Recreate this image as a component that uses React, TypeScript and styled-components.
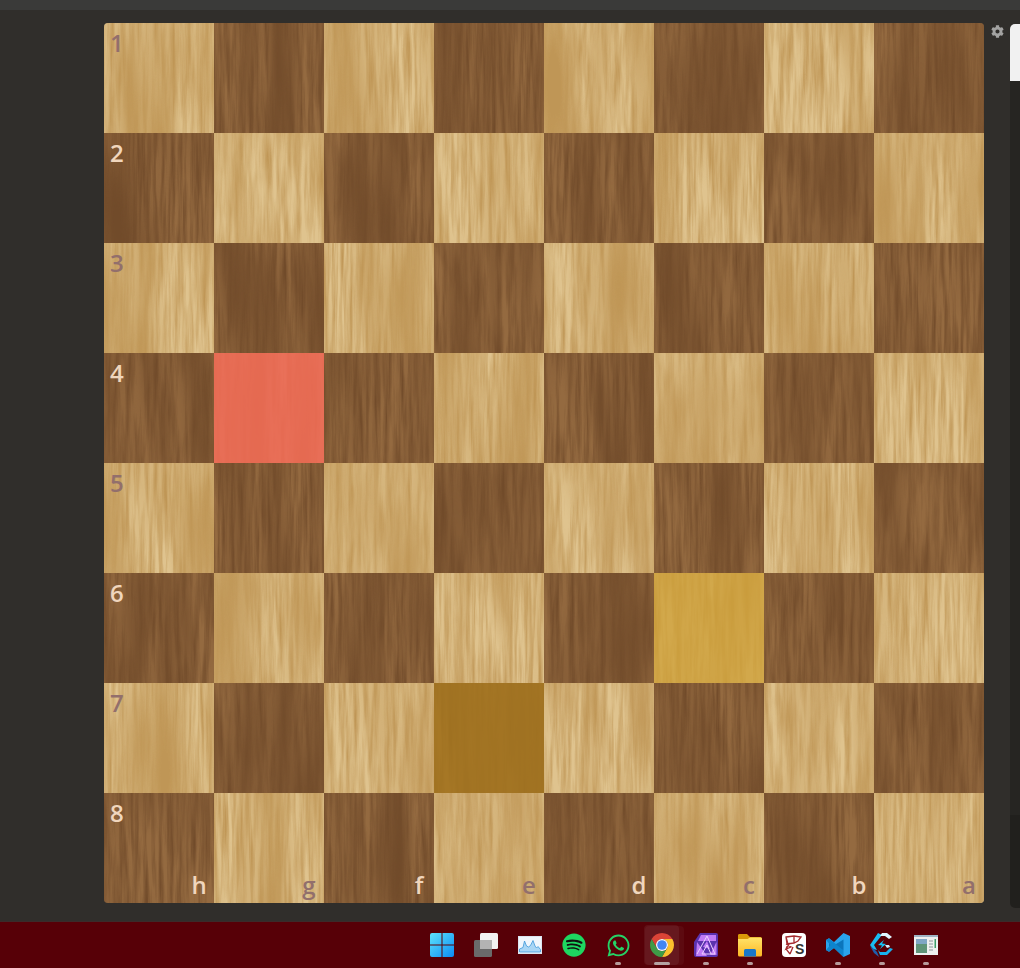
import React from "react";
import styled, { createGlobalStyle } from "styled-components";
import { FaCog, FaSpotify, FaWhatsapp } from "react-icons/fa";

const Global = createGlobalStyle`
  html, body { margin: 0; padding: 0; background: #302e2b; overflow: hidden; }
  * { box-sizing: border-box; }
`;

const Page = styled.div`
  width: 1020px;
  height: 968px;
  display: flex;
  flex-direction: column;
  background: #302e2b;
  font-family: "Open Sans", "Noto Sans", sans-serif;
`;
const TopBar = styled.div`
  height: 10px;
  background: #3a3a39;
`;
const Main = styled.main`
  flex: 1;
  display: flex;
  padding: 13px 0 0 104px;
`;
const Board = styled.div`
  width: 880px;
  height: 880px;
  display: grid;
  grid-template-columns: repeat(8, 110px);
  grid-template-rows: repeat(8, 110px);
  border-radius: 4px;
  overflow: hidden;
`;
const Cell = styled.div<{ $dark: boolean }>`
  position: relative;
  background: ${(p) => (p.$dark ? "#946a40" : "#dfc38e")};
`;
const GrainSvg = styled.svg`
  position: absolute;
  inset: 0;
  width: 110px;
  height: 110px;
  display: block;
`;
const Mark = styled.div<{ $color: string }>`
  position: absolute;
  inset: 0;
  background: ${(p) => p.$color};
`;
const Coord = styled.span<{ $dark: boolean }>`
  position: absolute;
  font-size: 24px;
  line-height: 32px;
  font-weight: 600;
  color: ${(p) => (p.$dark ? "#f0d6bd" : "#926f6c")};
`;
const Rank = styled(Coord)`
  top: 4px;
  left: 6px;
`;
const File = styled(Coord)`
  right: 6px;
  bottom: 2px;
  width: 18px;
  text-align: center;
`;
const Side = styled.aside`
  width: 26px;
  display: flex;
  justify-content: center;
  padding-top: 2px;
  color: #a3a3a2;
  font-size: 13px;
  line-height: 13px;
`;
const ScrollTrack = styled.div`
  width: 10px;
  height: 884px;
  margin-top: 1px;
  border-radius: 5px 0 0 5px;
  overflow: hidden;
  background: linear-gradient(#262522 0 791px, #21201d 791px);
`;
const ScrollThumb = styled.div`
  height: 57px;
  background: #f1f1f1;
`;
const Taskbar = styled.footer`
  height: 47px;
  display: flex;
  align-items: center;
  padding-left: 420px;
  background: #570007;
  border-top: 1px solid #3c2b2a;
`;
const TaskItem = styled.div<{ $active?: boolean }>`
  position: relative;
  width: 44px;
  height: 46px;
  display: flex;
  align-items: center;
  justify-content: center;
  ${(p) =>
    p.$active
      ? `&::before { content: ""; position: absolute; left: 5px; top: 4px; width: 39px; height: 39px; border-radius: 4px;
           background: rgba(255,255,255,.04); }
         &::after { content: ""; position: absolute; left: 4px; top: 3px; width: 35px; height: 40px; border-radius: 4px;
           background: rgba(255,255,255,.06); }`
      : ""}
`;
const IconSlot = styled.span`
  position: relative;
  z-index: 1;
  width: 24px;
  height: 24px;
  display: block;
  svg { display: block; }
`;
const Dot = styled.span<{ $wide?: boolean }>`
  position: absolute;
  z-index: 2;
  left: 50%;
  bottom: 3px;
  width: ${(p) => (p.$wide ? 16 : 6)}px;
  height: 3px;
  margin-left: ${(p) => (p.$wide ? -8 : -3)}px;
  border-radius: 2px;
  background: ${(p) => (p.$wide ? "#b5a3a3" : "#b79a9a")};
`;

function hash(n: number) {
  return ((n * 7919 + 13) % 997) + 1;
}
const Grain = ({ seed, dark }: { seed: number; dark: boolean }) => {
  const id = `wood-${seed}`;
  const c = dark ? "0 0 0 0 0.443  0 0 0 0 0.294  0 0 0 0 0.165" : "0 0 0 0 0.749  0 0 0 0 0.588  0 0 0 0 0.337";
  const fx = 0.16 + (seed % 5) * 0.02;
  const bx = 0.02 + (seed % 3) * 0.008;
  return (
    <GrainSvg viewBox="0 0 110 110">
      <defs>
        <filter id={id} x="0" y="0" width="100%" height="100%" colorInterpolationFilters="sRGB">
          <feTurbulence type="fractalNoise" baseFrequency={`${bx} 0.005`} numOctaves={2} seed={hash(seed)} result="broad" />
          <feColorMatrix in="broad" type="matrix" values={`${c}  1.9 0 0 0 -0.6`} result="a" />
          <feTurbulence type="fractalNoise" baseFrequency={`${fx} 0.012`} numOctaves={4} seed={hash(seed + 100)} result="fine" />
          <feColorMatrix in="fine" type="matrix" values={`${c}  1.9 0 0 0 -0.65`} result="b" />
          <feMerge>
            <feMergeNode in="a" />
            <feMergeNode in="b" />
          </feMerge>
        </filter>
      </defs>
      <rect width="110" height="110" filter={`url(#${id})`} />
    </GrainSvg>
  );
};

const Win = () => (
  <svg width="24" height="24" viewBox="0 0 24 24">
    <defs>
      <linearGradient id="w" x1="0" y1="0" x2="1" y2="1">
        <stop offset="0" stopColor="#5fe3fb" />
        <stop offset="1" stopColor="#0a8cf5" />
      </linearGradient>
    </defs>
    <path fill="url(#w)" d="M0 2a2 2 0 0 1 2-2h9.500v11.500H0zM12.500 0H22a2 2 0 0 1 2 2v9.500H12.500zM0 12.500h11.500V24H2a2 2 0 0 1-2-2zM12.500 12.500H24V22a2 2 0 0 1-2 2h-9.500z" />
  </svg>
);
const TaskView = () => (
  <svg width="24" height="24" viewBox="0 0 24 24">
    <rect x="0" y="7" width="18" height="17" rx="1.5" fill="#6a6a6a" />
    <rect x="6" y="0" width="18" height="16" rx="1.5" fill="#f2f2f2" />
    <rect x="6" y="7" width="12" height="9" fill="#b3b3b3" />
  </svg>
);
const Monitor = () => (
  <svg width="24" height="24" viewBox="0 0 24 24">
    <rect x="0" y="3" width="24" height="18" fill="#dbe5f0" />
    <rect x="1" y="4" width="22" height="16" fill="#f0f6fc" />
    <path fill="#a9d6f5" stroke="#3d97d8" strokeWidth=".8" d="M1.500 19V16L5 14.500 6.500 8 8.500 13l2 1 2-1.500 2.500-5L17 13l1.500 2L20 13.500l2.500 3V19z" />
  </svg>
);
const Chrome = () => (
  <svg width="24" height="24" viewBox="4 4 40 40">
    <path fill="#db4437" d="M6.680 14A20 20 0 0 1 41.320 14H24A10 10 0 0 0 15.340 29z" />
    <path fill="#fbc02d" d="M41.320 14A20 20 0 0 1 24 44L32.660 29A10 10 0 0 0 24 14z" />
    <path fill="#3f9b47" d="M24 44A20 20 0 0 1 6.680 14L15.340 29A10 10 0 0 0 32.660 29z" />
    <circle cx="24" cy="24" r="10" fill="#fff" />
    <circle cx="24" cy="24" r="8" fill="#4285f4" />
  </svg>
);
const Affinity = () => (
  <svg width="24" height="24" viewBox="0 0 24 24">
    <path fill="#5a32ae" d="M6 0h16a2 2 0 0 1 2 2v20a2 2 0 0 1-2 2H2a2 2 0 0 1-2-2V9z" />
    <path fill="#c07af5" d="M7 2h15v6H4zM22.500 9v13H16zM3 9l10 14H2zM9 14l4-6 3 8z" />
    <path fill="none" stroke="#ecd0ff" strokeWidth="1" d="M3 21 13 3l8 18H8l5-9 4 9" />
  </svg>
);
const Folder = () => (
  <svg width="24" height="24" viewBox="0 0 24 24">
    <defs>
      <linearGradient id="f" x1="0" y1="0" x2="0" y2="1">
        <stop offset="0" stopColor="#ffe36a" />
        <stop offset="1" stopColor="#fdb824" />
      </linearGradient>
    </defs>
    <path fill="#d99a09" d="M0 2a1.500 1.500 0 0 1 1.500-1H9l3 3h10.500A1.500 1.500 0 0 1 24 5.500V10H0z" />
    <path fill="url(#f)" d="M0 6h9.500L12 4.500h10.500A1.500 1.500 0 0 1 24 6v16a1.500 1.500 0 0 1-1.500 1.500h-21A1.500 1.500 0 0 1 0 22z" />
    <path fill="#1a78c8" d="M6 17.500a1.500 1.500 0 0 1 1.500-1.500h9a1.500 1.500 0 0 1 1.500 1.500v6H6z" />
  </svg>
);
const KS = () => (
  <svg width="24" height="24" viewBox="0 0 24 24">
    <rect width="24" height="24" rx="4" fill="#fff" />
    <path fill="none" stroke="#a52a2f" strokeWidth="1.300" d="M4 4 12 3l7 1-3 4-4 2-7 1zM4 4l2 7-2 5 4 5M12 3l0 7M8 10l-4 6 5-2-5-3M8 21l3-7" />
    <text x="13" y="21" fontFamily="Liberation Sans, sans-serif" fontSize="14" fontWeight="700" fill="#333">S</text>
  </svg>
);
const VSCode = () => (
  <svg width="24" height="24" viewBox="0 0 24 24">
    <path fill="#2aa3ec" d="M17.500 0 24 3v18l-6.500 3-9.500-9L3 18.700 0 17V7l3-1.700L8 9z" />
    <path fill="#0b75bb" d="M17.500 6.500v11L8.500 12zM3 8.500 6 12l-3 3.500z" />
    <path fill="#0e84cd" d="M0 7l3-1.700L17.500 17.500V24L8 15 3 18.700 0 17l4.500-5z" />
  </svg>
);
const Crystal = () => (
  <svg width="24" height="24" viewBox="0 0 24 24">
    <path fill="#19bdf2" d="M8 0 12 2 4 12l3 5-4-1-3-4z" />
    <path fill="#1f5fae" d="M0 13l4 3 3 3 2 5-5-4z" />
    <path fill="#dff6ff" d="M12 0h5l5 4-3 2-4-3h-5z" />
    <path fill="#18b2ec" d="M10 22h7l6-6-3-1-4 4h-6l-2-2z" />
    <path fill="#14c4f7" d="M14 7 8 12l4 .5-2 3.500 6-5-4-.5z" />
    <path fill="#cfeefd" d="M15 12h4l1 2-3 1z" />
  </svg>
);
const Sheet = () => (
  <svg width="24" height="24" viewBox="0 0 24 24">
    <rect y="2" width="24" height="20" fill="#eef0ef" />
    <rect y="2" width="24" height="2" fill="#9fb4c4" />
    <rect x="2" y="6" width="11" height="14" fill="#5f9478" />
    <rect x="2" y="6" width="11" height="5" fill="#7fa6c4" />
    <path stroke="#8d959b" strokeWidth="1.200" d="M15 8h4M15 11h4M15 14h4M15 17h4" />
    <rect x="20.500" y="6" width="1.500" height="9" fill="#3f9d6a" />
  </svg>
);
const Spotify = () => (
  <svg width="24" height="24" viewBox="0 0 24 24">
    <circle cx="12" cy="12" r="11" fill="#111" />
    <FaSpotify x={0} y={0} size={24} color="#1ed760" />
  </svg>
);

const tasks: { icon: React.ReactNode; dot?: boolean; active?: boolean }[] = [
  { icon: <Win /> },
  { icon: <TaskView /> },
  { icon: <Monitor /> },
  { icon: <Spotify /> },
  { icon: <FaWhatsapp size={25} color="#25d366" />, dot: true },
  { icon: <Chrome />, active: true },
  { icon: <Affinity />, dot: true },
  { icon: <Folder />, dot: true },
  { icon: <KS /> },
  { icon: <VSCode />, dot: true },
  { icon: <Crystal />, dot: true },
  { icon: <Sheet />, dot: true },
];

const files = ["h", "g", "f", "e", "d", "c", "b", "a"];
const marks: Record<string, string> = {
  "3-1": "rgba(235, 97, 80, 0.85)",
  "5-5": "rgba(205, 158, 50, 0.72)",
  "6-3": "rgba(170, 122, 32, 0.82)",
};

export default function App() {
  const rows = Array.from({ length: 8 }, (_, i) => i);
  return (
    <Page>
      <Global />
      <TopBar />
      <Main>
        <Board>
          {rows.flatMap((r) =>
            rows.map((c) => {
              const dark = (r + c) % 2 === 1;
              const mark = marks[`${r}-${c}`];
              return (
                <Cell key={`${r}-${c}`} $dark={dark}>
                  <Grain seed={r * 8 + c + 1} dark={dark} />
                  {mark && <Mark $color={mark} />}
                  {c === 0 && <Rank $dark={dark}>{r + 1}</Rank>}
                  {r === 7 && <File $dark={dark}>{files[c]}</File>}
                </Cell>
              );
            })
          )}
        </Board>
        <Side>
          <FaCog />
        </Side>
        <ScrollTrack>
          <ScrollThumb />
        </ScrollTrack>
      </Main>
      <Taskbar>
        {tasks.map((t, i) => (
          <TaskItem key={i} $active={t.active}>
            <IconSlot>{t.icon}</IconSlot>
            {t.dot && <Dot />}
            {t.active && <Dot $wide />}
          </TaskItem>
        ))}
      </Taskbar>
    </Page>
  );
}
